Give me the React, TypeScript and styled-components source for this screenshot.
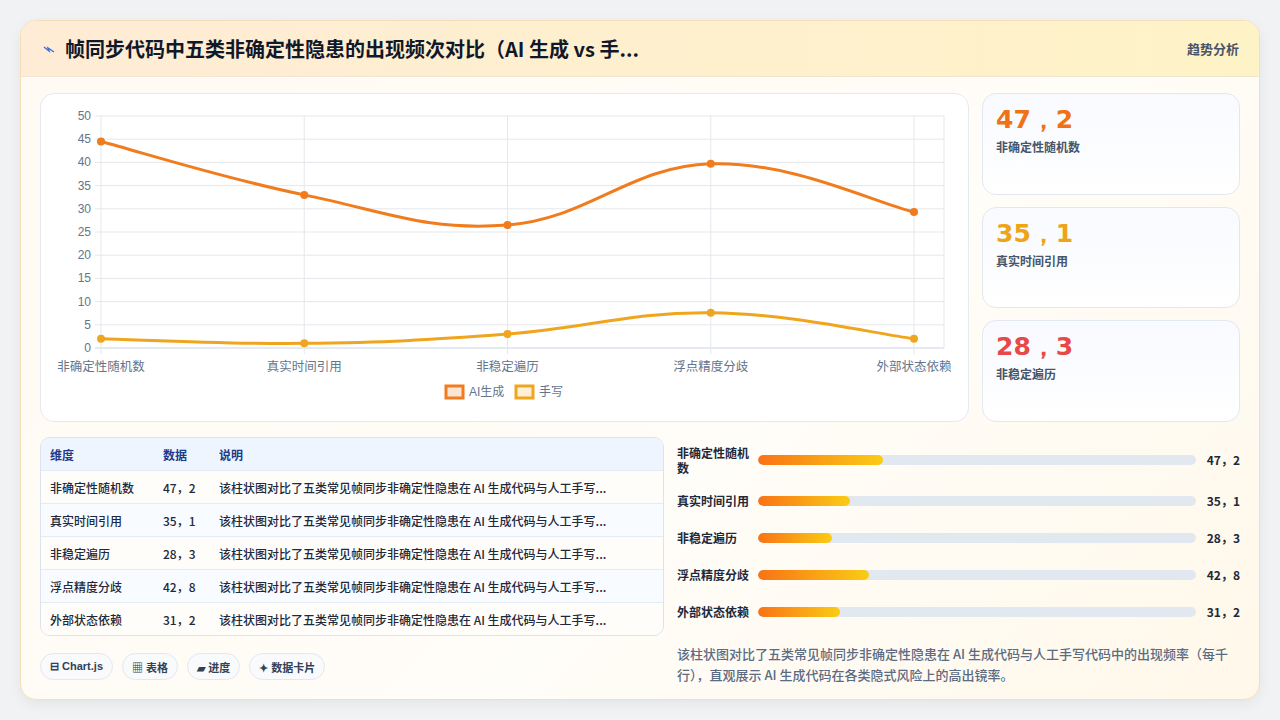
import React from "react";
import styled, { createGlobalStyle } from "styled-components";

const Global = createGlobalStyle`
  html, body { margin: 0; padding: 0; background: #f3f4f6; }
  body { font-family: "Inter", "Noto Sans CJK SC", sans-serif; color: #1e293b; }
  * { box-sizing: border-box; }
`;

const Page = styled.div`
  width: 1280px; height: 720px; padding: 20px 20px 20px 20px;
  background: #f1f2f4;
`;
const Card = styled.div`
  width: 1240px; height: 680px; border-radius: 16px; overflow: hidden;
  border: 1px solid #f5dfb8; background: linear-gradient(135deg, #fffaf3, #fffdf8 60%, #fff8ea);
  box-shadow: 0 4px 14px rgba(0,0,0,0.06);
  display: flex; flex-direction: column;
`;
const Header = styled.div`
  height: 56px; flex: none; display: flex; align-items: center; justify-content: space-between;
  padding: 0 20px 0 22px; border-bottom: 1px solid #f1e6cf;
  background: linear-gradient(90deg, #feecd6, #fef3c7);
`;
const Title = styled.div`
  font-size: 20px; font-weight: 700; color: #111827; display: flex; align-items: center; gap: 10px;
  font-family: "Noto Sans CJK SC", sans-serif;
`;
const HeaderTag = styled.div`font-size: 13px; font-weight: 600; color: #475569; font-family: "Noto Sans CJK SC", sans-serif;`;
const Body = styled.div`
  flex: 1; padding: 16px 19px 18px 19px; display: flex; flex-direction: column; gap: 15px;
`;
const Top = styled.div`display: flex; gap: 13px; height: 329px;`;
const ChartCard = styled.div`
  width: 929px; background: #fff; border: 1px solid #e5e9f0; border-radius: 14px; position: relative;
`;
const Stats = styled.div`flex: 1; display: flex; flex-direction: column; gap: 12px;`;
const Stat = styled.div`
  flex: 1; border-radius: 14px; border: 1px solid #e2e8f0; padding: 10px 13px;
  background: linear-gradient(180deg, #f8faff, #ffffff);
`;
const StatValue = styled.div<{ $c: string }>`
  font-family: "DejaVu Sans", sans-serif; font-weight: 700; font-size: 25px; color: ${p => p.$c}; line-height: 32px;
`;
const StatLabel = styled.div`font-size: 12px; color: #475569; font-weight: 600; margin-top: 2px; font-family: "Noto Sans CJK SC", sans-serif;`;
const Bottom = styled.div`display: flex; gap: 13px; flex: 1;`;
const Left = styled.div`width: 624px; display: flex; flex-direction: column; gap: 17px;`;
const Table = styled.div`
  border: 1px solid #dbe3ee; border-radius: 10px; overflow: hidden; background: #fff;
  font-family: "Noto Sans CJK SC", sans-serif; font-size: 12px;
`;
const Row = styled.div<{ $head?: boolean; $alt?: boolean }>`
  display: grid; grid-template-columns: 113px 56px 1fr; align-items: center; padding-left: 9px;
  height: ${p => (p.$head ? 32 : 33)}px;
  background: ${p => (p.$head ? "#eef5ff" : p.$alt ? "#f8fbff" : "#fffdf9")};
  color: ${p => (p.$head ? "#1e3a8a" : "#1e293b")};
  font-weight: ${p => (p.$head ? 600 : 500)};
  border-top: ${p => (p.$head ? "none" : "1px solid #e5ebf3")};
`;
const Cell = styled.div`white-space: nowrap; overflow: hidden; text-overflow: ellipsis; padding-right: 10px;`;
const Chips = styled.div`display: flex; gap: 9px;`;
const Chip = styled.div`
  height: 27px; padding: 0 9px; border-radius: 14px; border: 1px solid #e2e8f0; background: #f8fafc;
  font-size: 11px; font-weight: 600; color: #334155; display: flex; align-items: center; gap: 3px;
  font-family: "Liberation Sans", "Noto Sans CJK SC", sans-serif;
`;
const Right = styled.div`flex: 1; display: flex; flex-direction: column;`;
const BarRow = styled.div<{ $first?: boolean }>`
  display: grid; grid-template-columns: 81px 1fr 44px; align-items: center; height: ${p => (p.$first ? 45 : 37)}px;
`;
const BarLabel = styled.div`font-size: 12px; font-weight: 600; color: #1e293b; line-height: 15px; font-family: "Noto Sans CJK SC", sans-serif;`;
const Track = styled.div`height: 10px; border-radius: 5px; background: #e2e8f0; overflow: hidden;`;
const Fill = styled.div`height: 100%; border-radius: 5px; background: linear-gradient(90deg, #f97316, #facc15);`;
const BarValue = styled.div`text-align: right; font-size: 12px; font-weight: 700; color: #1e293b; font-family: "Noto Sans CJK SC", sans-serif;`;
const Desc = styled.div`
  margin-top: 13px; font-size: 13px; line-height: 21px; color: #5b6b82; font-weight: 500;
  font-family: "Noto Sans CJK SC", sans-serif;
`;

const cats = ["非确定性随机数", "真实时间引用", "非稳定遍历", "浮点精度分歧", "外部状态依赖"];
const vals = ["47，2", "35，1", "28，3", "42，8", "31，2"];
const pct = [28.5, 21, 16.9, 25.3, 18.7];
const ai = [44.5, 33, 26.5, 39.7, 29.3];
const hand = [2, 1, 3, 7.6, 2];
const desc = "该柱状图对比了五类常见帧同步非确定性隐患在 AI 生成代码与人工手写代码中的出现频率（每千行），直观展示 AI 生成代码在各类隐式风险上的高出镜率。";

const X0 = 60, X1 = 873, Y0 = 254, YT = 22;
const xs = cats.map((_, i) => X0 + ((X1 - X0) * i) / 4);
const yv = (v: number) => Y0 - ((Y0 - YT) * v) / 50;

function path(data: number[]) {
  const p = data.map((v, i) => [xs[i], yv(v)]);
  let d = `M${p[0][0]},${p[0][1]}`;
  const t = 0.2;
  for (let i = 0; i < p.length - 1; i++) {
    const p0 = p[i - 1] || p[i], p1 = p[i], p2 = p[i + 1], p3 = p[i + 2] || p2;
    const c1 = [p1[0] + (p2[0] - p0[0]) * t, p1[1] + (p2[1] - p0[1]) * t];
    const c2 = [p2[0] - (p3[0] - p1[0]) * t, p2[1] - (p3[1] - p1[1]) * t];
    d += ` C${c1[0]},${c1[1]} ${c2[0]},${c2[1]} ${p2[0]},${p2[1]}`;
  }
  return d;
}

function Chart() {
  const font = "Liberation Sans, Noto Sans CJK SC, sans-serif";
  return (
    <svg width="929" height="329" style={{ display: "block" }}>
      {[0, 5, 10, 15, 20, 25, 30, 35, 40, 45, 50].map(v => (
        <g key={v}>
          <line x1={X0 - 6} x2={X1 + 30} y1={yv(v)} y2={yv(v)} stroke={v === 0 ? "#cbd5e1" : "#e5e7eb"} />
          <text x={X0 - 10} y={yv(v) + 4} fontSize="12" fill="#64748b" textAnchor="end" fontFamily={font}>{v}</text>
        </g>
      ))}
      {xs.map((x, i) => (
        <g key={i}>
          <line x1={x} x2={x} y1={YT} y2={Y0 + 6} stroke="#e5e7eb" />
          <text x={x} y={Y0 + 23} fontSize="12.5" fill="#64748b" textAnchor="middle" fontFamily={font}>{cats[i]}</text>
        </g>
      ))}
      <line x1={X1 + 30} x2={X1 + 30} y1={YT} y2={Y0} stroke="#e5e7eb" />
      <path d={path(ai)} fill="none" stroke="#f07c1e" strokeWidth="3" />
      <path d={path(hand)} fill="none" stroke="#f0a51e" strokeWidth="3" />
      {ai.map((v, i) => <circle key={"a" + i} cx={xs[i]} cy={yv(v)} r="4" fill="#f07c1e" />)}
      {hand.map((v, i) => <circle key={"h" + i} cx={xs[i]} cy={yv(v)} r="4" fill="#f0a51e" />)}
      <rect x="405" y="292" width="17" height="12" fill="#fde5d3" stroke="#f07c1e" strokeWidth="3" />
      <text x="428" y="302" fontSize="12" fill="#64748b" fontFamily={font}>AI生成</text>
      <rect x="475" y="292" width="17" height="12" fill="#fdf0d6" stroke="#f0a51e" strokeWidth="3" />
      <text x="498" y="302" fontSize="12" fill="#64748b" fontFamily={font}>手写</text>
    </svg>
  );
}

export default function App() {
  return (
    <Page>
      <Global />
      <Card>
        <Header>
          <Title>
            <svg width="12" height="10" viewBox="0 0 12 10"><path d="M1 3 L6 7 L5 4 L11 8" stroke="#3b6fd8" strokeWidth="1.4" fill="none" /></svg>
            帧同步代码中五类非确定性隐患的出现频次对比（AI 生成 vs 手...
          </Title>
          <HeaderTag>趋势分析</HeaderTag>
        </Header>
        <Body>
          <Top>
            <ChartCard><Chart /></ChartCard>
            <Stats>
              <Stat><StatValue $c="#f07216">47，2</StatValue><StatLabel>非确定性随机数</StatLabel></Stat>
              <Stat><StatValue $c="#eda416">35，1</StatValue><StatLabel>真实时间引用</StatLabel></Stat>
              <Stat><StatValue $c="#e74848">28，3</StatValue><StatLabel>非稳定遍历</StatLabel></Stat>
            </Stats>
          </Top>
          <Bottom>
            <Left>
              <Table>
                <Row $head><Cell>维度</Cell><Cell>数据</Cell><Cell>说明</Cell></Row>
                {cats.map((c, i) => (
                  <Row key={c} $alt={i % 2 === 1}>
                    <Cell>{c}</Cell><Cell>{vals[i]}</Cell><Cell>该柱状图对比了五类常见帧同步非确定性隐患在 AI 生成代码与人工手写...</Cell>
                  </Row>
                ))}
              </Table>
              <Chips>
                <Chip>⊟ Chart.js</Chip>
                <Chip>▦ 表格</Chip>
                <Chip>▰ 进度</Chip>
                <Chip>✦ 数据卡片</Chip>
              </Chips>
            </Left>
            <Right>
              {cats.map((c, i) => (
                <BarRow key={c} $first={i === 0}>
                  <BarLabel>{c}</BarLabel>
                  <Track><Fill style={{ width: pct[i] + "%" }} /></Track>
                  <BarValue>{vals[i]}</BarValue>
                </BarRow>
              ))}
              <Desc>{desc}</Desc>
            </Right>
          </Bottom>
        </Body>
      </Card>
    </Page>
  );
}
